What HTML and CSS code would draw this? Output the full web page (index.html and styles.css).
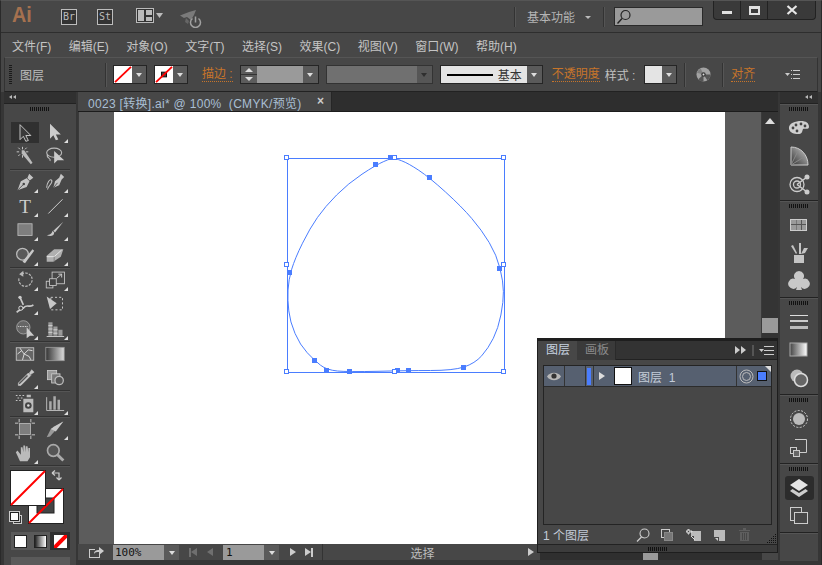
FILE: index.html
```html
<!DOCTYPE html>
<html lang="zh-CN">
<head>
<meta charset="utf-8">
<title>Adobe Illustrator</title>
<link rel="stylesheet" href="styles.css">
</head>
<body>
<svg class="defs" width="0" height="0" aria-hidden="true">
  <defs>
    <linearGradient id="gr" x1="0" x2="1" y1="0" y2="0"><stop offset="0" stop-color="#333"/><stop offset="1" stop-color="#ddd"/></linearGradient>
    <linearGradient id="grw" x1="0" x2="1" y1="0" y2="0"><stop offset="0" stop-color="#444"/><stop offset="1" stop-color="#fff"/></linearGradient>
    <linearGradient id="wedge" x1="0" x2="1" y1="1" y2="0"><stop offset="0" stop-color="#333"/><stop offset="1" stop-color="#ccc"/></linearGradient>
  </defs>
</svg>
<div class="app">
  <header class="titlebar">
    <span class="logo">Ai</span>
    <span class="badge b-br">Br</span>
    <span class="badge b-st">St</span>
    <svg class="layout-ic" width="28" height="16" viewBox="0 0 28 16"><rect x=".5" y=".5" width="17" height="14" fill="#333" stroke="#bbb"/><path d="M2 2h6v11H2zM10 2h6v5h-6zM10 9h6v4h-6z" fill="#bbb"/><path d="M20 5h7l-3.500 5z" fill="#bbb"/></svg>
    <svg class="sync-ic" width="24" height="18" viewBox="0 0 24 18"><path d="M0 5.500 9 2l7-2-2 5-3 5-4-3-3 1z" fill="#7a7a7a"/><path d="M6 8l3 3-1 3-3-2z" fill="#666"/><path d="M12.500 8.500a5 5 0 1 0 6 0" fill="none" stroke="#a0a0a0" stroke-width="1.500"/><path d="M15.500 6.500v6" stroke="#a0a0a0" stroke-width="1.500"/></svg>
    <span class="spacer"></span>
    <span class="vsep"></span>
    <span class="workspace">基本功能</span>
    <span class="mini-caret"></span>
    <span class="vsep"></span>
    <span class="search"><svg width="16" height="16" viewBox="0 0 16 16"><circle cx="9.500" cy="6" r="4.500" fill="none" stroke="#222" stroke-width="1.200"/><path d="M6 9.500 1.500 14.500" stroke="#222" stroke-width="1.400"/></svg></span>
    <div class="winbtns">
      <span class="wb wb-min"><i></i></span>
      <span class="wb wb-max"><i></i></span>
      <span class="wb wb-close"><svg width="12" height="10" viewBox="0 0 12 10"><path d="M1.500 1l9 8M10.500 1l-9 8" stroke="#e8e8e8" stroke-width="2.200"/></svg></span>
    </div>
  </header>

  <nav class="menubar">
    <span>文件(F)</span><span>编辑(E)</span><span>对象(O)</span><span>文字(T)</span><span>选择(S)</span><span>效果(C)</span><span>视图(V)</span><span>窗口(W)</span><span>帮助(H)</span>
  </nav>

  <section class="control">
    <span class="grip-v"></span>
    <span class="ctl-name">图层</span>
    <span class="csep s1"></span>
    <span class="swatch-drop sd1"><svg class="swatch" width="18" height="17" viewBox="0 0 18 18" preserveAspectRatio="none"><rect width="18" height="18" fill="#fff"/><path d="M1 17 17 1" stroke="#f00" stroke-width="1.800"/></svg><span class="drop"><i class="caret"></i></span></span>
    <span class="swatch-drop sd2"><svg class="swatch" width="18" height="17" viewBox="0 0 18 18" preserveAspectRatio="none"><rect width="18" height="18" fill="#fff"/><rect x="6.500" y="6.500" width="5" height="5" fill="#444" stroke="#111"/><path d="M1 17 17 1" stroke="#f00" stroke-width="1.800"/></svg><span class="drop"><i class="caret"></i></span></span>
    <span class="orange stroke-lbl">描边 :</span>
    <span class="stepper"><span class="spin"><i class="up"></i><i class="dn"></i></span><span class="field"></span><span class="drop"><i class="caret"></i></span></span>
    <span class="dim-combo"><span class="dim-field"></span><span class="drop dim"><i class="caret"></i></span></span>
    <span class="stroke-combo"><span class="stroke-prev"><i class="line"></i><b>基本</b></span><span class="drop"><i class="caret"></i></span></span>
    <span class="orange opacity-lbl">不透明度</span>
    <span class="style-lbl">样式 :</span>
    <span class="swatch-drop sd3"><span class="sw-light"></span><span class="drop"><i class="caret"></i></span></span>
    <span class="csep s2"></span>
    <svg class="recolor" width="15" height="15" viewBox="0 0 16 16"><circle cx="8" cy="8" r="7.500" fill="#a2a2a2"/><path d="M8 8 2.500 13A7.500 7.500 0 0 0 8 15.500zM8 8 15.500 8A7.500 7.500 0 0 1 12 14z" fill="#555"/><path d="M8 8 1 6A7.500 7.500 0 0 1 5 1.500z" fill="#808080"/><circle cx="8" cy="8" r="2.400" fill="#3a3a3a"/><circle cx="8" cy="8" r="1" fill="#ddd"/></svg>
    <span class="csep s3"></span>
    <span class="orange align-lbl">对齐</span>
    <svg class="menu-ic ctl-menu" width="15" height="9" viewBox="0 0 15 9"><path d="M0 3h5L2.500 6z" fill="#ccc"/><path d="M6 .5h1M6 4.500h1M6 8.500h1M8 .5h7M8 4.500h7M8 8.500h7" stroke="#ccc"/></svg>
  </section>

  <main class="workspace-row">
    <aside class="toolbar">
      <div class="dock-head left"><i class="arrows l"></i></div>
      <div class="tools">
        <div class="grip-h"></div>
        <div class="tool-grid">
          <span class="tool active"><svg viewBox="0 0 24 24"><path d="M6 2v18l4-4 3 6 3-1-3-6h6z" fill="#3a3a3a" stroke="#ddd" stroke-width="1"/></svg></span>
          <span class="tool tri"><svg viewBox="0 0 24 24"><path d="M6 2v18l4-4 3 6 3-1-3-6h6z" fill="#ccc"/></svg></span>
          <span class="tool"><svg viewBox="0 0 24 24"><path d="M9 1v3M9 14v-3M2 7h3M16 7h-3M4 2l2 2M14 2l-2 2M4 12l2-2" stroke="#ddd"/><path d="M8 5h3l10 15-2 2-11-13z" fill="#bbb"/></svg></span>
          <span class="tool"><svg viewBox="0 0 24 24"><ellipse cx="11" cy="8" rx="9" ry="5.500" fill="none" stroke="#bbb" stroke-width="1.300"/><path d="M3 10c-2 5 5 4 3 8" fill="none" stroke="#bbb" stroke-width="1.300"/><path d="M11 6v15l4-4h8z" fill="#ccc"/></svg></span>
        </div>
        <div class="hsep"></div>
        <div class="tool-grid">
          <span class="tool tri"><svg viewBox="0 0 24 24"><path d="M17 2l5 5-4 3-4 8-11 4 4-11 8-4z" fill="#c4c4c4"/><path d="M3 22l7-7" stroke="#444"/><circle cx="10.500" cy="14.500" r="1.500" fill="#444"/><path d="M14 7l4 4" stroke="#444"/></svg></span>
          <span class="tool tri"><svg viewBox="0 0 24 24"><path d="M19 2l4 4-3 3-3 7-7 3 2-8 5-4z" fill="#c4c4c4"/><path d="M10 19l5-6" stroke="#444"/><path d="M2 19c0-5 4-12 6-9 2 3-4 6-5 11" fill="none" stroke="#c4c4c4" stroke-width="1.300"/></svg></span>
          <span class="tool tri"><svg viewBox="0 0 24 24"><text x="12" y="20" class="t-glyph" text-anchor="middle">T</text></svg></span>
          <span class="tool tri"><svg viewBox="0 0 24 24"><path d="M4 21 21 4" stroke="#ccc" stroke-width="1.200"/></svg></span>
          <span class="tool tri"><svg viewBox="0 0 24 24"><rect x="3.500" y="4.500" width="17" height="14" fill="#7e7e7e" stroke="#bbb"/></svg></span>
          <span class="tool tri"><svg viewBox="0 0 24 24"><path d="M9 13c-1 4-3 5-7 5 3 2 9 2 9-3z" fill="#c8c8c8"/><path d="M22 2 10 13l2 2z" fill="#c8c8c8"/></svg></span>
          <span class="tool tri"><svg viewBox="0 0 24 24"><circle cx="9" cy="11" r="7" fill="#5a5a5a" stroke="#bbb" stroke-width="1.500"/><path d="M9 20 21 5l2 2-11 15z" fill="#c8c8c8"/></svg></span>
          <span class="tool tri"><svg viewBox="0 0 24 24"><path d="M2 13 11 5h11l-3 9-9 6H2z" fill="#b0b0b0"/><path d="M2 14h9l9-8" fill="none" stroke="#eee"/><path d="M11 14v6" stroke="#777"/></svg></span>
        </div>
        <div class="hsep"></div>
        <div class="tool-grid">
          <span class="tool tri"><svg viewBox="0 0 24 24"><path d="M8 5A8 8 0 1 1 5 9" fill="none" stroke="#bbb" stroke-width="1.400" stroke-dasharray="3 1.500"/><path d="M10 1 5 5l5 3z" fill="#bbb"/></svg></span>
          <span class="tool tri"><svg viewBox="0 0 24 24"><rect x="8.500" y="2.500" width="15" height="14" fill="none" stroke="#ccc"/><rect x="1.500" y="13.500" width="8" height="8" fill="none" stroke="#ccc"/><rect x="5.500" y="10.500" width="8" height="8" fill="#444" stroke="#ccc"/><path d="M14 10l6-5M16 5h4v4" fill="none" stroke="#ddd"/></svg></span>
          <span class="tool tri"><svg viewBox="0 0 24 24"><path d="M2 22c3-3 6-3 9-6 3-4 8 1 11-3M6 4l4 9" fill="none" stroke="#c8c8c8" stroke-width="2"/><circle cx="6" cy="4" r="2" fill="#ccc"/><circle cx="7" cy="17" r="2.500" fill="#444" stroke="#eee"/></svg></span>
          <span class="tool"><svg viewBox="0 0 24 24"><rect x="7" y="4" width="14" height="15" fill="none" stroke="#ddd" stroke-dasharray="2.500 2.500"/><path d="M2 3 14 11 6 18z" fill="#c8c8c8"/></svg></span>
          <span class="tool tri"><svg viewBox="0 0 24 24"><circle cx="10" cy="10" r="8" fill="#666" stroke="#aaa"/><path d="M4 9h11" stroke="#fff" stroke-dasharray="1 1"/><path d="M14 10v13l4-3h5z" fill="#ccc"/></svg></span>
          <span class="tool tri"><svg viewBox="0 0 24 24"><path d="M4 4h5v16H4zM10 9h5v11h-5zM16 13h5v7h-5z" fill="#999"/><path d="M2 21h21M4 8h5M4 12h5M4 16h5M10 13h5M10 17h5" stroke="#ddd"/></svg></span>
        </div>
        <div class="hsep"></div>
        <div class="tool-grid">
          <span class="tool"><svg viewBox="0 0 24 24"><rect x="1.500" y="4.500" width="21" height="15" fill="#666" stroke="#ccc"/><path d="M3 12 8 8l3 4 5-5 5 1M8 8 6 5M11 12l-2 7M11 12l6 3 2 4" fill="none" stroke="#eee"/></svg></span>
          <span class="tool"><svg viewBox="0 0 24 24"><rect x="1" y="4" width="22" height="16" fill="url(#gr)" stroke="#999"/></svg></span>
          <span class="tool tri"><svg viewBox="0 0 24 24"><path d="M20 2l3 3-3 2-1 1-2-2 1-1zM16 6l3 3L7 21H4v-3z" fill="#c8c8c8" stroke="#ddd" stroke-width=".5"/><path d="M5 19 15 9" stroke="#555" stroke-width="1.600"/></svg></span>
          <span class="tool"><svg viewBox="0 0 24 24"><rect x="3" y="3" width="11" height="11" fill="#999" stroke="#ccc"/><rect x="8" y="7" width="10" height="11" fill="#777" stroke="#ccc"/><circle cx="17" cy="15" r="5" fill="#555" stroke="#bbb" stroke-width="1.500"/></svg></span>
        </div>
        <div class="hsep"></div>
        <div class="tool-grid">
          <span class="tool tri"><svg viewBox="0 0 24 24"><path d="M1 3h2M5 3h2M9 3h2M3 6h2M7 6h2M1 9h2M5 9h2" stroke="#ddd"/><path d="M14 2h5v3h-5zM10 7h12v16H10z" fill="#bbb"/><circle cx="16" cy="15" r="4" fill="#444"/><circle cx="16" cy="15" r="1.500" fill="#ddd"/></svg></span>
          <span class="tool tri"><svg viewBox="0 0 24 24"><path d="M5 10h3v10H5zM10 4h3v16h-3zM15 8h3v12h-3z" fill="#aaa"/><path d="M2 5v16h21" fill="none" stroke="#ccc"/></svg></span>
        </div>
        <div class="hsep"></div>
        <div class="tool-grid">
          <span class="tool"><svg viewBox="0 0 24 24"><rect x="5.500" y="5.500" width="13" height="13" fill="#7e7e7e" stroke="#bbb"/><path d="M5 0v4M19 0v4M5 20v4M19 20v4M0 5h4M0 19h4M20 5h4M20 19h4" stroke="#ddd"/></svg></span>
          <span class="tool tri"><svg viewBox="0 0 24 24"><path d="M22 3 6 21l-4 1 5-10z" fill="#999"/><path d="M22 3 11 9l-4 3 6 3z" fill="#c8c8c8"/></svg></span>
          <span class="tool tri"><svg viewBox="0 0 24 24"><path d="M6 22 1 11l2-2 4 5V5h2l1 6V3h2l1 8V4h2l1 7V6h2v11l-3 5z" fill="#bbb"/></svg></span>
          <span class="tool"><svg viewBox="0 0 24 24"><circle cx="10" cy="9" r="7" fill="#555" stroke="#aaa" stroke-width="2"/><path d="M15 14l7 7" stroke="#aaa" stroke-width="3.500"/></svg></span>
        </div>
        <div class="hsep"></div>
        <div class="color-well">
          <svg class="well" width="72" height="64" viewBox="0 0 72 64">
            <rect x="24.500" y="20.500" width="35" height="35" fill="#fff" stroke="#222"/>
            <rect x="33" y="30" width="17" height="15" fill="#444" stroke="#222"/>
            <path d="M25 55 59 21" stroke="#f00" stroke-width="2"/>
            <rect x="6.500" y="2.500" width="35" height="35" fill="#fff" stroke="#222"/>
            <path d="M7 37 41 3" stroke="#f00" stroke-width="2"/>
            <path d="M49 4h7v7M49 4l3-2.500M49 4l3 2.500M56 11l-2.500-2.500M56 11l2.500-2.500" fill="none" stroke="#ccc" stroke-width="1.200" transform="translate(-1 1)"/>
            <rect x="9.500" y="47.500" width="8" height="8" fill="#333" stroke="#ccc"/>
            <rect x="6.500" y="44.500" width="8" height="8" fill="#fff" stroke="#222"/>
            <rect x="5.500" y="43.500" width="10" height="10" fill="none" stroke="#ccc"/>
          </svg>
        </div>
        <div class="modes">
          <span class="mode"><i class="m-white"></i></span>
          <span class="mode"><i class="m-grad"></i></span>
          <span class="mode m-on"><svg width="13" height="13" viewBox="0 0 13 13"><rect width="13" height="13" fill="#fff"/><path d="M0 13 13 0" stroke="#f00" stroke-width="4"/></svg></span>
        </div>
        <div class="draw-modes"></div>
      </div>
    </aside>

    <section class="doc">
      <div class="tabbar">
        <span class="tab">0023 [转换].ai* @ 100%&nbsp; (CMYK/预览)<i class="tab-x">×</i></span>
      </div>
      <div class="doc-body">
        <div class="pasteboard">
          <div class="artboard">
            <svg class="art" width="611" height="432" viewBox="114 112 611 432">
              <g fill="none" stroke="#4a7dff">
                <rect x="287.500" y="158.500" width="217" height="214"/>
                <path d="M383.800 161.500Q375.700 165 362 174.200Q348.300 183.300 336.600 195Q325 206.700 317.500 217.400Q310 228 302.500 243.200Q295 258.300 291.700 269.200Q288.500 280 288 290Q287.500 300 288.800 310.900Q290 321.700 295 333.400Q300 345 307.200 352.700Q314.300 360.300 320.500 365.200Q326.700 370 337.400 371Q348 372 378 371.300Q408 370.500 430.500 370.500Q453 370.500 464 367Q475 363.300 481.700 355.800Q488.300 348.300 493.300 338.300Q498.300 328.300 500.900 315Q503.500 301.700 503.400 291.700Q503.300 281.700 500 268.400Q496.700 255 489.200 242.500Q481.700 230 471.700 218.400Q461.700 206.700 445.500 192Q429.300 177.300 418.800 170.300Q408.300 163.300 401.700 160.800Q395 158.300 393.500 158.100Q392 158 383.800 161.500Z"/>
              </g>
              <g fill="#4a7dff">
                <rect x="373" y="162" width="5" height="5"/><rect x="388" y="155" width="5" height="5"/><rect x="427" y="175" width="5" height="5"/>
                <rect x="497" y="266" width="5" height="5"/><rect x="287" y="270" width="5" height="5"/>
                <rect x="312" y="358" width="5" height="5"/><rect x="324" y="368" width="5" height="5"/><rect x="347" y="369" width="5" height="5"/>
                <rect x="395" y="368" width="5" height="5"/><rect x="406" y="368" width="5" height="5"/><rect x="461" y="365" width="5" height="5"/>
              </g>
              <g fill="#fff" stroke="#4a7dff">
                <rect x="284.500" y="155.500" width="4" height="4"/><rect x="392.500" y="155.500" width="4" height="4"/><rect x="501.500" y="155.500" width="4" height="4"/>
                <rect x="284.500" y="262.500" width="4" height="4"/><rect x="501.500" y="262.500" width="4" height="4"/>
                <rect x="284.500" y="369.500" width="4" height="4"/><rect x="392.500" y="369.500" width="4" height="4"/><rect x="501.500" y="369.500" width="4" height="4"/>
              </g>
            </svg>
          </div>
          <div class="pb-right"></div>
        </div>
        <div class="vscroll">
          <i class="up-arrow"></i>
          <span class="thumb"></span>
        </div>
      </div>
      <div class="statusbar">
        <span class="share"><svg width="16" height="12" viewBox="0 0 16 12"><path d="M1 3h6v1H2v7h9V8h1v4H1z" fill="#ccc"/><path d="M6 8c0-3 2-4 5-4V1l5 4-5 4V6C9 6 7 6 6 8z" fill="#ccc"/></svg></span>
        <span class="zoom-field">100%</span><span class="drop sb"><i class="caret"></i></span>
        <i class="nav first dimmed"></i><i class="nav prev dimmed"></i>
        <span class="page-field">1</span><span class="drop sb"><i class="caret"></i></span>
        <i class="nav next"></i><i class="nav last"></i>
        <span class="status-txt">选择</span>
        <i class="nav next end"></i>
        <span class="hs-track"><span class="hs-thumb"></span></span>
        <span class="hs-corner"></span>
      </div>
    </section>

    <aside class="dock">
      <div class="dock-head right"><i class="arrows l"></i></div>
      <div class="dock-group g1">
        <div class="grip-h"></div>
        <svg class="d-ic" viewBox="0 0 22 22"><path d="M1 12C0 6 8 4 13 4s8 2 8 6c-.5 3-4 1-6 2-1 3-1 5-5 5S2 16 1 12z" fill="#cfcfcf"/><g fill="#444"><circle cx="5" cy="11" r="1.400"/><circle cx="8" cy="8" r="1.400"/><circle cx="13" cy="7" r="1.400"/><circle cx="17" cy="9" r="1.400"/><circle cx="9" cy="14" r="1.400"/></g></svg>
        <svg class="d-ic" viewBox="0 0 22 22"><path d="M3 2c10 0 17 8 17 18H3z" fill="url(#wedge)" stroke="#ccc"/><path d="M3 20 10 6M3 20 16 12" stroke="#888"/></svg>
        <svg class="d-ic" viewBox="0 0 22 22"><circle cx="9" cy="11.500" r="7" fill="none" stroke="#ccc" stroke-width="1.300"/><circle cx="9" cy="11.500" r="3.500" fill="#474747" stroke="#ccc" stroke-width="1.300"/><path d="M9 11.500 19 4M9 11.500l10 7.500" stroke="#ccc" stroke-width="1.500"/><circle cx="19" cy="4" r="2.500" fill="#ccc"/><circle cx="19" cy="19" r="2.500" fill="#ccc"/></svg>
      </div>
      <div class="dock-group g2">
        <div class="grip-h"></div>
        <svg class="d-ic" viewBox="0 0 22 22"><rect x="2.500" y="5.500" width="16" height="11" fill="#555" stroke="#ccc"/><path d="M3 6h5v4H3zM8.500 6h4.500v4H8.500zM14 6h4v4h-4zM3 11h5v5H3zM8.500 11h4.500v5H8.500zM14 11h4v5h-4z" fill="#9a9a9a"/></svg>
        <svg class="d-ic" viewBox="0 0 22 22"><path d="M6 13h10v8H6z" fill="#c4c4c4"/><path d="M8 12 3 4l2-1 4 8zM11 12V1h2v11zM13 12l3-6 4 0-3 5z" fill="#c4c4c4"/></svg>
        <svg class="d-ic" viewBox="0 0 22 22"><path d="M11 1a5 5 0 0 1 4 8 5 5 0 1 1-2 8l1 3H8l1-3a5 5 0 1 1-2-8 5 5 0 0 1 4-8z" fill="#c8c8c8"/></svg>
      </div>
      <div class="dock-group g3">
        <div class="grip-h"></div>
        <svg class="d-ic" viewBox="0 0 22 22"><path d="M2 4h18v1H2z" fill="#ddd"/><path d="M2 9h18v2H2z" fill="#ccc"/><path d="M2 15h18v3H2z" fill="#bbb"/></svg>
        <svg class="d-ic" viewBox="0 0 22 22"><rect x="2" y="4" width="17" height="13" fill="url(#grw)" stroke="#aaa"/></svg>
        <svg class="d-ic" viewBox="0 0 22 22"><circle cx="9" cy="9" r="6.500" fill="#bbb"/><circle cx="13" cy="13" r="6.500" fill="#666" stroke="#ddd" stroke-width="1.500"/></svg>
      </div>
      <div class="dock-group g4">
        <div class="grip-h"></div>
        <svg class="d-ic" viewBox="0 0 22 22"><circle cx="11" cy="11" r="6" fill="#bbb"/><circle cx="11" cy="11" r="8.500" fill="none" stroke="#ccc" stroke-dasharray="2 1.500"/></svg>
        <svg class="d-ic" viewBox="0 0 22 22"><path d="M7 3.500h11.500v13H10" fill="none" stroke="#ccc"/><rect x="2.500" y="11.500" width="6" height="6" fill="none" stroke="#ccc"/><rect x="5.500" y="14.500" width="6" height="6" fill="#666" stroke="#ccc"/></svg>
      </div>
      <div class="dock-group g5">
        <div class="grip-h"></div>
        <span class="d-active"><svg class="d-ic" viewBox="0 0 22 22"><path d="M11 2 20 8l-9 6L2 8z" fill="#e4e4e4"/><path d="M4.500 12l6.500 4 6.500-4 2.500 2-9 6-9-6z" fill="#ccc"/></svg></span>
        <svg class="d-ic" viewBox="0 0 22 22"><rect x="2.500" y="2.500" width="11" height="13" fill="none" stroke="#ccc"/><rect x="6.500" y="7.500" width="13" height="11" fill="#474747" stroke="#ccc"/></svg>
      </div>
      <div class="dock-rest"></div>
    </aside>
  </main>

  <section class="layers">
    <div class="lp-tabs">
      <span class="lp-tab on">图层</span>
      <span class="lp-tab off">画板</span>
      <span class="spacer"></span>
      <svg class="ff" width="12" height="8" viewBox="0 0 12 8"><path d="M0 0l5 4-5 4zM6 0l5 4-5 4z" fill="#ccc"/></svg>
      <span class="lp-sep"></span>
      <svg class="menu-ic" width="15" height="9" viewBox="0 0 15 9"><path d="M0 3h5L2.500 6z" fill="#ccc"/><path d="M5 .5h10M5 4.500h10M5 8.500h10" stroke="#ccc"/></svg>
    </div>
    <div class="lp-list">
      <div class="lp-row">
        <span class="c-eye"><svg width="14" height="9" viewBox="0 0 14 9"><path d="M0 4.500C3-.5 11-.5 14 4.500 11 9.500 3 9.500 0 4.500z" fill="#b8b8b8"/><circle cx="7" cy="4" r="2.600" fill="#333"/></svg></span>
        <span class="c-lock"></span>
        <span class="c-color"><i></i></span>
        <i class="c-arrow"></i>
        <span class="c-thumb"></span>
        <span class="c-name">图层&nbsp; 1</span>
        <span class="c-target"><svg width="15" height="15" viewBox="0 0 15 15"><circle cx="7.500" cy="7.500" r="6.500" fill="none" stroke="#bbb"/><circle cx="7.500" cy="7.500" r="4" fill="none" stroke="#bbb"/></svg></span>
        <span class="c-sel"><i></i></span>
      </div>
    </div>
    <div class="lp-foot">
      <span class="lp-count">1 个图层</span>
      <span class="spacer"></span>
      <svg class="f-ic f1" width="14" height="14" viewBox="0 0 14 14"><circle cx="8.500" cy="5.500" r="4.500" fill="none" stroke="#ccc" stroke-width="1.100"/><path d="M5.500 9 1 13.500" stroke="#ccc" stroke-width="1.300"/></svg>
      <svg class="f-ic f2" width="14" height="14" viewBox="0 0 14 14"><rect x="1.500" y="1.500" width="8" height="8" fill="none" stroke="#ccc"/><rect x="4.500" y="4.500" width="8" height="8" fill="#777" stroke="#888"/></svg>
      <svg class="f-ic f3" width="15" height="12" viewBox="0 0 15 12"><path d="M5 2h10v10H8V7H5z" fill="#bbb"/><path d="M0 2h2V0h1v2h3v1H3v2H2V3H0zM5 7l4 4" stroke="#ddd" fill="none"/></svg>
      <svg class="f-ic f4" width="11" height="12" viewBox="0 0 11 12"><path d="M0 1h11v11H5V8H0z" fill="#bbb"/><path d="M1 9h3v3z" fill="#ccc"/></svg>
      <svg class="f-ic f5" width="11" height="13" viewBox="0 0 11 13"><path d="M0 2h11v1H0zM4 0h3v2H4zM1 4h9v9H1z" fill="#5e5e5e"/><path d="M3.500 5v7M5.500 5v7M7.500 5v7" stroke="#474747"/></svg>
      <svg class="resize" width="9" height="9" viewBox="0 0 9 9"><path d="M8 0h1v1H8zM6 2h1v1H6zM8 2h1v1H8zM4 4h1v1H4zM6 4h1v1H6zM8 4h1v1H8zM2 6h1v1H2zM4 6h1v1H4zM6 6h1v1H6zM8 6h1v1H8zM0 8h1v1H0zM2 8h1v1H2zM4 8h1v1H4zM6 8h1v1H6zM8 8h1v1H8z" fill="#111"/></svg>
    </div>
    <div class="lp-grip"><div class="grip-h"></div></div>
  </section>
</div>
</body>
</html>
```

FILE: styles.css
```css
* { box-sizing: border-box; }
html, body { margin: 0; padding: 0; width: 822px; height: 565px; overflow: hidden; background: #2a2a2a; }
.defs { position: absolute; }
.app {
  position: relative;
  width: 822px;
  height: 565px;
  display: flex;
  flex-direction: column;
  background: #474747;
  color: #c8c8c8;
  font: 12px "Liberation Sans", "Noto Sans CJK SC", sans-serif;
  border: 1px solid #2a2a2a;
  border-top-color: #555;
  border-bottom: 0;
  overflow: hidden;
}
.spacer { flex: 1; }

.titlebar { height: 32px; flex: none; display: flex; align-items: center; padding-left: 11px; border-bottom: 1px solid #2e2e2e; position: relative; }
.logo { font: bold 22px "Liberation Sans", sans-serif; color: #a5714f; width: 38px; margin-top: -3px; transform: scaleX(.9); transform-origin: left; }
.badge { width: 16px; height: 16px; border: 1px solid #bdbdbd; background: #333; color: #bbb; font: 10px "DejaVu Sans Mono", monospace; display: flex; align-items: center; justify-content: center; }
.b-br { margin-left: 11px; }
.b-st { margin-left: 20px; }
.layout-ic { margin-left: 23px; margin-top: -1px; }
.sync-ic { margin-left: 16px; margin-top: 4px; }
.vsep { width: 1px; height: 20px; background: #333; border-right: 1px solid #555; box-sizing: content-box; }
.workspace { margin-left: 11px; color: #b4b4b4; font-size: 12px; width: 48px; white-space: nowrap; }
.mini-caret { width: 0; height: 0; border: 3px solid transparent; border-top: 3px solid #bbb; margin: 5px 12px 0 10px; }
.search { width: 89px; height: 19px; margin-left: 9px; margin-right: 10px; background: #9a9a9a; border: 1px solid #2a2a2a; display: flex; align-items: center; padding-left: 1px; }
.winbtns { display: flex; align-self: flex-start; height: 19px; margin-right: 5px; background: #3a3a3a; border: 1px solid #222; border-top: 0; border-radius: 0 0 4px 4px; }
.wb { display: flex; align-items: center; justify-content: center; height: 100%; border-right: 1px solid #222; }
.wb-min { width: 27px; }
.wb-max { width: 27px; }
.wb-close { width: 47px; border-right: 0; }
.wb-min i { width: 10px; height: 3px; background: #e0e0e0; margin-top: 5px; }
.wb-max i { width: 11px; height: 9px; border: 2px solid #e0e0e0; border-top-width: 3px; }

.menubar { height: 24px; flex: none; display: flex; align-items: center; padding-left: 11px; font-size: 12px; color: #c4c4c4; }
.menubar span { margin-right: 17.500px; white-space: nowrap; }

.control { height: 35px; flex: none; margin: 0 3px; display: flex; align-items: center; background: #474747; border: 1px solid #333; border-top-color: #555; border-bottom: 1px solid #222; position: relative; }
.grip-v { width: 3px; height: 20px; margin-left: 4px; background: repeating-linear-gradient(to bottom, #1a1a1a 0 1px, transparent 1px 2px); flex: none; }
.ctl-name { margin-left: 8px; font-size: 12px; color: #bdbdbd; width: 24px; white-space: nowrap; flex: none; }
.csep { width: 1px; height: 24px; background: #333; border-right: 1px solid #565656; box-sizing: content-box; flex: none; }
.s1 { margin-left: 61px; }
.swatch-drop { display: flex; height: 19px; border: 1px solid #252525; background: #333; flex: none; }
.sd1 { margin-left: 6px; }
.sd2 { margin-left: 7px; }
.swatch-drop .drop { width: 14px; }
.swatch { display: block; }
.drop { width: 15px; background: #5a5a5a; display: flex; align-items: center; justify-content: center; height: 100%; flex: none; }
.drop.dim { background: #565656; }
.caret { width: 0; height: 0; border: 3.500px solid transparent; border-top: 4px solid #ddd; margin-top: 4px; }
.drop.dim .caret { border-top-color: #2f2f2f; }
.orange { color: #c8752a; border-bottom: 1px dotted #c8752a; line-height: 13px; white-space: nowrap; flex: none; }
.stroke-lbl { margin-left: 14px; }
.stepper { display: flex; height: 19px; margin-left: 7px; border: 1px solid #252525; flex: none; }
.spin { width: 16px; background: #5c5c5c; display: flex; flex-direction: column; }
.spin i { flex: 1; display: flex; align-items: center; justify-content: center; position: relative; }
.spin .up { border-bottom: 1px solid #333; }
.spin .up::after { content: ""; border: 4px solid transparent; border-top: 0; border-bottom: 4px solid #ddd; }
.spin .dn::after { content: ""; border: 4px solid transparent; border-bottom: 0; border-top: 4px solid #ddd; }
.field { width: 46px; background: #9a9a9a; }
.dim-combo { display: flex; height: 19px; margin-left: 7px; border: 1px solid #333; flex: none; }
.dim-field { width: 90px; background: #707070; }
.stroke-combo { display: flex; height: 19px; margin-left: 7px; border: 1px solid #252525; flex: none; }
.stroke-prev { width: 86px; background: #e4e4e4; display: flex; align-items: center; color: #333; padding-left: 6px; font-size: 12px; }
.stroke-prev .line { width: 46px; height: 2px; background: #000; margin-right: 5px; flex: none; }
.stroke-prev b { font-weight: normal; white-space: nowrap; }
.opacity-lbl { margin-left: 9px; }
.style-lbl { margin-left: 5px; white-space: nowrap; color: #c0c0c0; flex: none; }
.sd3 { margin-left: 9px; }
.sw-light { width: 17px; height: 100%; background: #e4e4e4; }
.s2 { margin-left: 7px; }
.recolor { margin-left: 10px; flex: none; }
.s3 { margin-left: 11px; }
.align-lbl { margin-left: 7px; }
.ctl-menu { margin-left: 30px; flex: none; }

.workspace-row { flex: 1; min-height: 0; display: flex; padding: 0 3px; background: #363636; }
.toolbar { width: 72px; flex: none; background: #474747; display: flex; flex-direction: column; min-height: 0; overflow: hidden; }
.dock-head { height: 12px; flex: none; background: #303030; border-bottom: 1px solid #222; display: flex; align-items: center; padding: 0 5px; }
.dock-head.right { justify-content: flex-end; }
.arrows { width: 8px; height: 5px; position: relative; display: block; }
.arrows::before, .arrows::after { content: ""; position: absolute; top: 0; border: 2.500px solid transparent; border-left: 0; border-right: 3.500px solid #bbb; }
.arrows::before { left: 0; }
.arrows::after { left: 4px; }
.tools { padding-top: 3px; display: flex; flex-direction: column; }
.grip-h { height: 4px; width: 20px; margin: 0 auto; flex: none; background: repeating-linear-gradient(to right, #111 0 1px, transparent 1px 2px); }
.tools > .grip-h { margin-bottom: 9px; }
.tool-grid { display: grid; grid-template-columns: 30px 30px; justify-content: center; grid-auto-rows: 24.300px; }
.tool { position: relative; display: flex; align-items: center; justify-content: center; }
.tool svg { width: 20px; height: 20px; display: block; }
.t-glyph { font: 23px "Liberation Serif", serif; fill: #ccc; }
.tool.active { background: #303030; background-clip: padding-box; border: solid transparent; border-width: 2px 1px 1px; }
.tool.tri::after { content: ""; position: absolute; right: 2px; bottom: 1px; border: 2px solid transparent; border-right-color: #ddd; border-bottom-color: #ddd; }
.hsep { height: 1px; background: #333; margin: 0 6px; box-shadow: 0 1px 0 #555; }
.color-well { height: 66px; flex: none; }
.well { display: block; margin-top: 2px; }
.modes { display: flex; margin: 0 6px 0 7px; height: 18px; background: #2f2f2f; flex: none; }
.mode { height: 18px; display: flex; align-items: center; justify-content: center; background: #5a5a5a; flex: 1; }
.mode.m-on { background: #2f2f2f; }
.m-white { width: 13px; height: 13px; background: #fff; display: block; border: 1px solid #222; }
.m-grad { width: 13px; height: 13px; display: block; background: linear-gradient(to right, #222, #fff); border: 1px solid #222; }
.draw-modes { height: 10px; margin: 7px 6px 0 7px; background: #5a5a5a; flex: none; }

.doc { width: 700px; flex: none; margin: 0 0 5px 2px; display: flex; flex-direction: column; min-width: 0; }
.tabbar { height: 20px; flex: none; background: #2e2e2e; border-bottom: 1px solid #1c1c1c; display: flex; align-items: flex-end; }
.tab { height: 19px; width: 254px; background: #474747; color: #a9bfd4; font-size: 12px; letter-spacing: .3px; padding: 2px 0 0 10px; white-space: nowrap; position: relative; border-right: 1px solid #262626; }
.tab-x { position: absolute; left: 239px; top: 2px; font-style: normal; color: #ccc; font-size: 12px; font-weight: bold; }
.doc-body { height: 432px; flex: none; display: flex; }
.pasteboard { width: 684px; flex: none; display: flex; background: #5c5c5c; padding-left: 35px; border-left: 1px solid #3a3a3a; }
.artboard { width: 611px; background: #fff; height: 100%; overflow: hidden; flex: none; }
.art { display: block; }
.pb-right { flex: 1; background: #5c5c5c; border-right: 1px solid #3a3a3a; }
.statusbar { height: 16px; flex: none; background: #474747; display: flex; align-items: center; }
.share { width: 35px; flex: none; display: flex; justify-content: center; align-items: center; }
.zoom-field, .page-field { background: #9a9a9a; color: #111; height: 15px; font-size: 11px; line-height: 15px; padding-left: 2px; flex: none; font-family: "DejaVu Sans Mono", monospace; }
.zoom-field { width: 51px; }
.page-field { width: 41px; margin-left: 10px; padding-left: 3px; }
.drop.sb { height: 15px; width: 15px; }
.nav { display: block; height: 9px; position: relative; flex: none; }
.nav::before { content: ""; position: absolute; top: 0; border: 4.500px solid transparent; }
.first { width: 8px; margin-left: 10px; }
.prev { width: 6px; margin-left: 10px; }
.next { width: 6px; margin-left: 11px; }
.last { width: 8px; margin-left: 9px; }
.first::before, .prev::before { right: 0; border-left: 0; border-right: 6px solid #bbb; }
.first::after { content: ""; position: absolute; left: 0; top: 0; width: 2px; height: 9px; background: #bbb; }
.next::before, .last::before { left: 0; border-right: 0; border-left: 6px solid #ccc; }
.last::after { content: ""; position: absolute; right: 0; top: 0; width: 2px; height: 9px; background: #ccc; }
.dimmed { opacity: .35; }
.status-txt { width: 200px; text-align: center; margin-left: 9px; border-left: 1px solid #333; color: #bdbdbd; flex: none; }
.nav.end { margin-left: 6px; }
.hs-track { flex: 1; height: 16px; background: #2f2f2f; margin-left: 6px; position: relative; }
.hs-thumb { position: absolute; left: 103px; top: 9px; width: 15px; height: 7px; background: #9a9a9a; }
.hs-corner { width: 16px; height: 16px; flex: none; background: #474747; }

.vscroll { width: 16px; flex: none; background: #343434; position: relative; display: flex; flex-direction: column; align-items: center; }
.up-arrow { display: block; margin-top: 6px; border: 5px solid transparent; border-top: 0; border-bottom: 6px solid #ddd; }
.thumb { position: absolute; left: 0; right: 0; top: 206px; height: 15px; background: #9a9a9a; }

.dock { width: 38px; flex: none; margin: 0 0 4px 2px; background: #3a3a3a; display: flex; flex-direction: column; min-height: 0; overflow: hidden; }
.dock-group { display: flex; flex-direction: column; align-items: center; gap: 6px; background: #474747; border-bottom: 1px solid #222; border-top: 1px solid #555; padding-top: 2px; flex: none; }
.g1, .g2, .g3 { height: 97px; }
.g4, .g5 { height: 69px; }
.dock-rest { flex: 1; background: #474747; border-top: 1px solid #555; }
.d-ic { width: 22px; height: 22px; display: block; flex: none; }
.d-active { width: 29px; height: 24px; background: #2c2c2c; border-radius: 3px; display: flex; align-items: center; justify-content: center; flex: none; margin-top: -1px; margin-bottom: -1px; }

.layers { position: absolute; left: 536px; top: 337px; width: 241px; height: 215px; background: #474747; border: 1px solid #1e1e1e; border-top-width: 3px; display: flex; flex-direction: column; }
.lp-tabs { height: 19px; flex: none; background: #333; display: flex; align-items: center; border-bottom: 1px solid #222; }
.lp-tab { height: 19px; line-height: 19px; padding: 0 8px; font-size: 12px; width: 39px; white-space: nowrap; flex: none; }
.lp-tab.on { background: #474747; color: #c8d4e0; }
.lp-tab.off { background: #3a3a3a; color: #8a8a8a; border-right: 1px solid #2a2a2a; }
.ff { margin-right: 5px; flex: none; }
.lp-sep { width: 2px; height: 11px; background: #555; margin-right: 5px; }
.lp-tabs .menu-ic { margin-right: 3px; }
.lp-list { margin: 5px 5px 0 5px; height: 160px; flex: none; background: #474747; border: 1px solid #242424; }
.lp-row { height: 21px; background: #566070; display: flex; align-items: center; border-bottom: 1px solid #2c2c2c; position: relative; }
.lp-row::after { content: ""; position: absolute; right: 0; top: 0; border: 3px solid transparent; border-top-color: #ddd; border-right-color: #ddd; }
.c-eye { width: 21px; height: 100%; border-right: 1px solid #333; display: flex; align-items: center; justify-content: center; flex: none; }
.c-lock { width: 21px; height: 100%; border-right: 1px solid #333; flex: none; }
.c-color { width: 6px; height: 100%; border-right: 1px solid #333; padding-left: 1px; flex: none; box-sizing: content-box; display: flex; align-items: center; }
.c-color i { width: 4px; height: 17px; background: #4a7dff; display: block; }
.c-arrow { display: block; margin-left: 5px; border: 4px solid transparent; border-right: 0; border-left: 6px solid #ddd; flex: none; }
.c-thumb { width: 18px; height: 18px; background: #fff; border: 1px solid #111; margin-left: 9px; flex: none; }
.c-name { margin-left: 6px; color: #c4ccd8; flex: 1; font-size: 12px; white-space: nowrap; }
.c-target { width: 19px; height: 100%; border-left: 1px solid #333; display: flex; align-items: center; justify-content: center; box-sizing: content-box; flex: none; }
.c-sel { width: 15px; height: 100%; display: flex; align-items: center; padding-left: 1px; flex: none; }
.c-sel i { width: 8px; height: 8px; background: #4a7dff; border: 1px solid #111; display: block; box-sizing: content-box; }
.lp-foot { flex: 1; display: flex; align-items: center; padding: 0 5px; position: relative; }
.lp-count { white-space: nowrap; color: #c4ccd8; font-size: 12px; }
.f-ic { flex: none; }
.f2 { margin-left: 10px; }
.f3 { margin-left: 12px; }
.f4 { margin-left: 13px; }
.f5 { margin-left: 14px; margin-right: 22px; }
.resize { position: absolute; right: 1px; bottom: 1px; }
.lp-grip { height: 8px; flex: none; background: #3c3c3c; border-top: 1px solid #222; display: flex; align-items: center; }
```
